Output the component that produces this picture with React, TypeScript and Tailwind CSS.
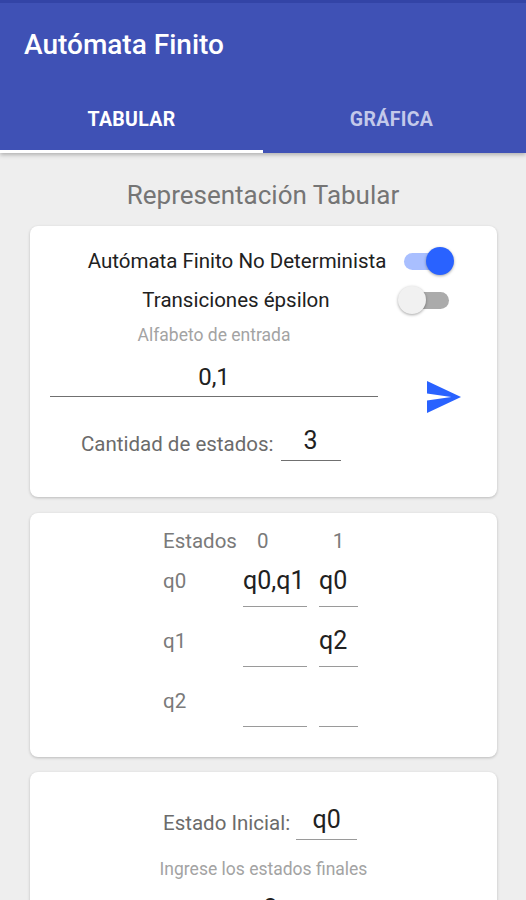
import React from "react";

const font = { fontFamily: "Roboto, 'Noto Sans', Arial, sans-serif" };

function Switch({ on }: { on: boolean }) {
  return (
    <div className="relative w-[44px] h-[28px] flex items-center">
      <div
        className={
          "w-[44px] h-[17px] rounded-full " + (on ? "bg-[#A9BFFF]" : "bg-[#ABABAB]")
        }
      />
      <div
        className={
          "absolute top-0 w-[28px] h-[28px] rounded-full shadow-[0_1px_3px_rgba(0,0,0,0.35)] " +
          (on ? "left-[22px] bg-[#2962FF]" : "left-[-7px] bg-[#F1F1F1]")
        }
      />
    </div>
  );
}

function Cell({ value, w }: { value?: string; w: string }) {
  return (
    <div className={w + " h-[46px] border-b-[1.5px] border-[#9A9A9A] pt-[5px]"}>
      <div className="text-[25px] leading-[30px] text-[#212121] whitespace-nowrap">{value ?? ""}</div>
    </div>
  );
}

export default function App() {
  return (
    <div className="w-[526px] h-[900px] overflow-hidden bg-[#EEEEEE]" style={font}>
      {/* Header */}
      <div className="relative z-10 shadow-[0_2px_4px_rgba(0,0,0,0.25)]">
        <div className="h-[3px] bg-[#3344A6]" />
        <div className="bg-[#3F51B5]">
          <div className="h-[87px] pl-[24px] pt-[25px]">
            <div className="text-[28px] leading-[34px] font-medium text-white">Autómata Finito</div>
          </div>
          <div className="flex h-[63px]">
            <div className="flex-1 flex flex-col">
              <div className="h-[60px] flex items-center justify-center text-[19.5px] font-bold text-white tracking-[0.3px]">
                TABULAR
              </div>
              <div className="h-[3px] bg-white" />
            </div>
            <div className="flex-1 flex flex-col">
              <div className="h-[60px] flex items-center justify-center text-[19.5px] font-bold text-[#C3C9EA] tracking-[0.3px] pr-[6px]">
                GRÁFICA
              </div>
            </div>
          </div>
        </div>
      </div>

      {/* Title */}
      <div className="mt-[27px] text-center text-[26px] leading-[30px] text-[#757575]">
        Representación Tabular
      </div>

      {/* Card 1 */}
      <div className="mt-[16px] ml-[30px] w-[467px] bg-white rounded-[8px] shadow-[0_1px_3px_rgba(0,0,0,0.22)] pt-[18px] pb-[36px]">
        <div className="flex items-center h-[34px]">
          <div className="w-[412px] text-center text-[20.5px] text-[#212121] leading-[26px] pl-[2px]">
            Autómata Finito No Determinista
          </div>
          <div className="ml-[-38px]">
            <Switch on={true} />
          </div>
        </div>
        <div className="flex items-center h-[34px] mt-[5px]">
          <div className="w-[412px] text-center text-[20.5px] text-[#212121] leading-[26px]">
            Transiciones épsilon
          </div>
          <div className="ml-[-37px]">
            <Switch on={false} />
          </div>
        </div>
        <div className="mt-[7px] w-[412px] text-center text-[17.5px] leading-[22px] text-[#A3A3A3]">
          <span className="relative left-[-22px]">Alfabeto de entrada</span>
        </div>
        <div className="flex items-start mt-[16px]">
          <div className="ml-[20px] w-[328px] border-b-[1.5px] border-[#707070] pb-[4px]">
            <div className="text-center text-[24px] leading-[30px] text-[#212121]">0,1</div>
          </div>
          <svg
            className="ml-[49px] mt-[19px] mb-[-20px]"
            width="34"
            height="32"
            viewBox="2 3 21 18"
            preserveAspectRatio="none"
          >
            <path d="M2.01 21L23 12 2.01 3 2 10l15 2-15 2z" fill="#2962FF" />
          </svg>
        </div>
        <div className="flex items-center mt-[29px] pl-[51px]">
          <div className="text-[20.5px] leading-[26px] text-[#6B6B6B]">Cantidad de estados:</div>
          <div className="ml-[7px] w-[60px] border-b-[1.5px] border-[#707070] pb-[4px]">
            <div className="text-center text-[25px] leading-[30px] text-[#212121]">3</div>
          </div>
        </div>
      </div>

      {/* Card 2 */}
      <div className="mt-[16px] ml-[30px] w-[467px] bg-white rounded-[8px] shadow-[0_1px_3px_rgba(0,0,0,0.22)] pt-[16px] pb-[30px] pl-[133px]">
        <div className="flex h-[24px] items-center text-[20.5px] leading-[24px] text-[#7A7A7A]">
          <div className="w-[80px]">Estados</div>
          <div className="w-[64px] pl-[14px]">0</div>
          <div className="w-[39px] ml-[12px] text-center">1</div>
        </div>
        {[
          ["q0", "q0,q1", "q0"],
          ["q1", "", "q2"],
          ["q2", "", ""],
        ].map((r, i) => (
          <div key={i} className={"flex items-center " + (i === 0 ? "mt-[8px]" : "mt-[14px]")}>
            <div className="w-[80px] text-[20.5px] leading-[24px] text-[#7A7A7A] mb-[6px]">{r[0]}</div>
            <Cell w="w-[64px]" value={r[1]} />
            <div className="w-[12px]" />
            <Cell w="w-[39px]" value={r[2]} />
          </div>
        ))}
      </div>

      {/* Card 3 */}
      <div className="mt-[15px] ml-[30px] w-[467px] h-[200px] bg-white rounded-[8px] shadow-[0_1px_3px_rgba(0,0,0,0.22)] pt-[33px]">
        <div className="flex items-center pl-[133px]">
          <div className="text-[20.5px] leading-[26px] text-[#6B6B6B]">Estado Inicial:</div>
          <div className="ml-[6px] w-[61px] border-b-[1.5px] border-[#9A9A9A] pb-[4px]">
            <div className="text-center text-[25px] leading-[30px] text-[#212121]">q0</div>
          </div>
        </div>
        <div className="mt-[18px] text-center text-[17.5px] leading-[22px] text-[#A3A3A3]">
          Ingrese los estados finales
        </div>
        <div className="mt-[14px] text-center text-[25px] leading-[30px] text-[#212121]">q2</div>
      </div>
    </div>
  );
}
